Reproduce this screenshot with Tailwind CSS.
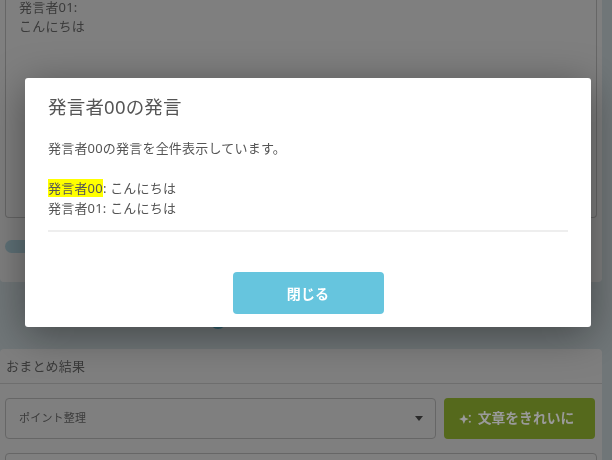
<!DOCTYPE html>
<html lang="ja">
<head>
    <meta charset="UTF-8">
    <title>発言者00の発言</title>
    <script src="https://cdn.jsdelivr.net/npm/@tailwindcss/browser@4"></script>
</head>
<body class="bg-[#e0ecf0] font-['Noto_Sans','Noto_Sans_CJK_JP',sans-serif]">
    <div class="relative h-[460px] w-[612px] overflow-hidden text-[#555] tracking-[0.2px] blur-[0.4px]">
        <!-- page behind the dialog -->
        <div class="flex w-[602px] flex-col">
            <div class="h-[282px] rounded-b bg-white px-[5px]">
                <div class="h-[218px] rounded-b border border-t-0 border-[#ccc] px-[13px] text-[13px] text-[#777]">
                    <p class="h-[15px] leading-[15px]">発言者01:</p>
                    <p class="mt-[2px] h-[19px] leading-[19px]">こんにちは</p>
                </div>
                <div class="mt-[22px] flex h-[13px] w-[60px] justify-end rounded-full bg-[#bfe3ee]">
                    <div class="h-[13px] w-[13px] rounded-full bg-[#5bb8d4]"></div>
                </div>
            </div>
            <div class="mt-[31px] ml-[210px] h-[16px] w-[16px] rounded-full bg-[#5bb8d4]"></div>
            <div class="mt-[20px] h-[111px] rounded-t bg-white text-[#777]">
                <div class="flex h-[35px] items-center border-b border-[#ddd] px-[6px] pt-[1px] text-[13px]">おまとめ結果</div>
                <div class="mt-[14px] flex gap-2 px-[5px] pr-[7px]">
                    <div class="flex h-[41px] flex-1 items-center justify-between rounded border border-[#ccc] pr-[12px] pl-[13px] text-[11px]">
                        <span>ポイント整理</span>
                        <span class="h-0 w-0 border-x-[4px] border-t-[5px] border-x-transparent border-t-[#555]"></span>
                    </div>
                    <div class="relative z-10 flex h-[41px] w-[151px] items-center justify-center gap-[6px] rounded bg-[#55691c] pr-[6px] text-[13.8px] font-bold tracking-normal text-[#9a9a9a]">
                        <svg class="h-[13px] w-[13px]" viewBox="0 0 12 12" fill="currentColor">
                            <path d="M4.5 2 5.8 5.2 9 6.5 5.8 7.8 4.5 11 3.2 7.8 0 6.5 3.2 5.2Z"/>
                            <circle cx="10" cy="3.5" r="1"/>
                            <circle cx="10" cy="9" r="1"/>
                        </svg>
                        <span>文章をきれいに</span>
                    </div>
                </div>
                <div class="mx-[5px] mt-[14px] h-[20px] rounded-t border border-[#ccc]"></div>
            </div>
        </div>

        <!-- backdrop -->
        <div class="absolute inset-0 bg-black/50"></div>

        <!-- dialog -->
        <div class="absolute top-[78px] left-[25px] z-20 flex h-[249px] w-[566px] flex-col rounded-[3px] bg-white px-[23px] shadow-[0_8px_40px_rgba(0,0,0,0.4)]">
            <h2 class="mt-[16px] h-[26px] text-[18.5px] leading-[26px]">発言者00の発言</h2>
            <p class="mt-[18px] h-[20px] text-[13px] leading-[20px]">発言者00の発言を全件表示しています。</p>
            <div class="mt-[20px] border-b-2 border-[#eee] pb-[12px] text-[13px] leading-[20px]">
                <p class="h-[20px]"><mark class="bg-[#ffff00] text-[#555]">発言者00</mark>: こんにちは</p>
                <p class="h-[20px]">発言者01: こんにちは</p>
            </div>
            <button class="mx-auto mt-[40px] h-[42px] w-[151px] rounded bg-[#66c5de] text-[14px] font-bold text-white">閉じる</button>
        </div>
    </div>
</body>
</html>
